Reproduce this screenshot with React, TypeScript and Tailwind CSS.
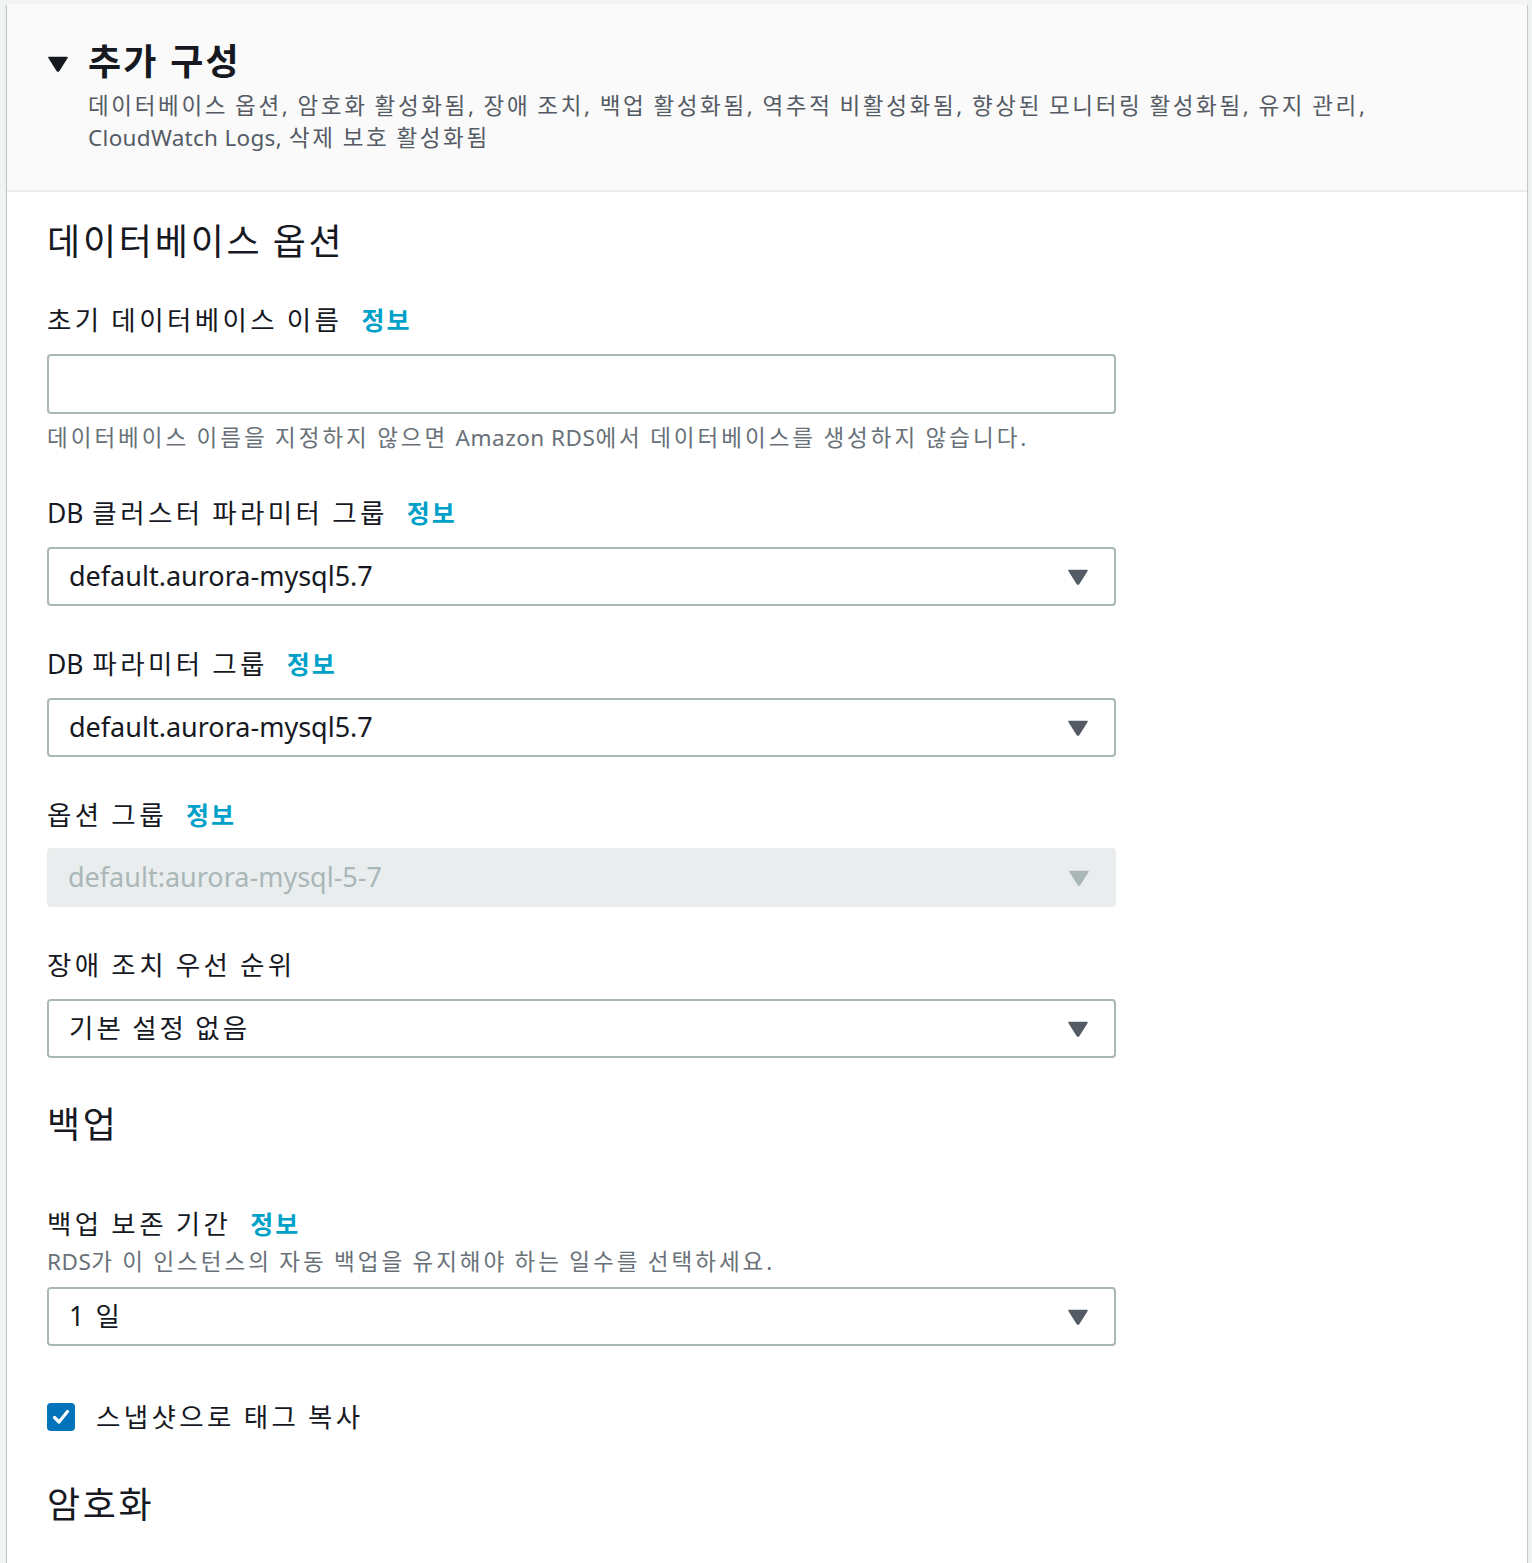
import React from "react";

const font = { fontFamily: '"Noto Sans", "Noto Sans CJK KR", sans-serif' };

function Info() {
  return <span className="ml-[19px] text-[25px] font-bold tracking-[2px] text-[#00a1c9] [word-spacing:0px]">정보</span>;
}

function Label({ children, info = true }: { children: React.ReactNode; info?: boolean }) {
  return (
    <div className="flex items-center h-[36px] text-[26.5px] leading-[36px] tracking-[3.4px] [word-spacing:-1.5px] text-[#16191f]">
      <span>{children}</span>
      {info && <Info />}
    </div>
  );
}

function Arrow({ color }: { color: string }) {
  return (
    <svg width="20" height="16" viewBox="0 0 20 16" className="shrink-0">
      <path d="M1 1.5 L19 1.5 L10.8 14.5 Q10 15.6 9.2 14.5 Z" fill={color} stroke={color} strokeWidth="1.5" strokeLinejoin="round" />
    </svg>
  );
}

function Select({ value, disabled = false, korean = false }: { value: string; disabled?: boolean; korean?: boolean }) {
  const base = disabled
    ? "flex items-center justify-between w-[1069px] h-[59px] rounded-[4px] bg-[#eaeded] pl-[21px] pr-[27px] text-[#aab7b8]"
    : "flex items-center justify-between w-[1069px] h-[59px] rounded-[4px] border-2 border-[#aab7b8] bg-white pl-[20px] pr-[26px] text-[#16191f]";
  return (
    <div className={base}>
      <span className={korean ? "text-[26.5px] tracking-[3px] [word-spacing:-1.5px]" : "text-[27px]"}>{value}</span>
      <Arrow color={disabled ? "#aab7b8" : "#545b64"} />
    </div>
  );
}

export default function App() {
  return (
    <div className="min-h-[1563px] bg-[#f2f3f3] pt-[4px] pl-[7px] pr-[5px]" style={font}>
      <div className="bg-white min-h-[1559px] shadow-[0_1px_1px_0_rgba(0,28,36,0.3),1px_1px_1px_0_rgba(0,28,36,0.15),-1px_1px_1px_0_rgba(0,28,36,0.15)]">
        <div className="h-[188px] bg-[#fafafa] border-b-2 border-[#eaeded] pt-[36px] pl-[41px]">
          <div className="flex items-center h-[44px]">
            <svg width="20" height="16" viewBox="0 0 20 16" className="mr-[20px] mt-[4px]">
              <path d="M1 1.5 L19 1.5 L10.8 14.5 Q10 15.6 9.2 14.5 Z" fill="#16191f" stroke="#16191f" strokeWidth="1.5" strokeLinejoin="round" />
            </svg>
            <span className="text-[36px] font-bold tracking-[2.2px] text-[#16191f] leading-[44px]">추가 구성</span>
          </div>
          <div className="ml-[40px] mt-[6px] text-[22.5px] leading-[32px] tracking-[2.65px] [word-spacing:-1.5px] text-[#545b64] w-[1400px]">
            데이터베이스 옵션, 암호화 활성화됨, 장애 조치, 백업 활성화됨, 역추적 비활성화됨, 향상된 모니터링 활성화됨, 유지 관리,
            <br />
            <span className="tracking-[0.3px] [word-spacing:0px]">CloudWatch Logs,</span> 삭제 보호 활성화됨
          </div>
        </div>

        <div className="pl-[40px] pt-[28px]">
          <div className="h-[44px] leading-[44px] text-[36px] tracking-[2.8px] [word-spacing:-2px] text-[#16191f]">데이터베이스 옵션</div>

          <div className="mt-[38px]">
            <Label>초기 데이터베이스 이름</Label>
          </div>
          <div className="mt-[16px] w-[1069px] h-[60px] rounded-[4px] border-2 border-[#aab7b8] bg-white" />
          <div className="mt-[9px] h-[30px] leading-[30px] text-[22.5px] tracking-[3px] [word-spacing:-1.5px] text-[#687078]">
            데이터베이스 이름을 지정하지 않으면 <span className="tracking-[0.5px] [word-spacing:0px]">Amazon RDS</span>에서 데이터베이스를 생성하지 않습니다.
          </div>

          <div className="mt-[42px]">
            <Label>
              <span className="tracking-[0px]">DB</span> 클러스터 파라미터 그룹
            </Label>
          </div>
          <div className="mt-[16px]">
            <Select value="default.aurora-mysql5.7" />
          </div>

          <div className="mt-[40px]">
            <Label>
              <span className="tracking-[0px]">DB</span> 파라미터 그룹
            </Label>
          </div>
          <div className="mt-[16px]">
            <Select value="default.aurora-mysql5.7" />
          </div>

          <div className="mt-[40px]">
            <Label>옵션 그룹</Label>
          </div>
          <div className="mt-[15px]">
            <Select value="default:aurora-mysql-5-7" disabled />
          </div>

          <div className="mt-[40px]">
            <Label info={false}>장애 조치 우선 순위</Label>
          </div>
          <div className="mt-[16px]">
            <Select value="기본 설정 없음" korean />
          </div>

          <div className="mt-[45px] h-[44px] leading-[44px] text-[36px] tracking-[2.6px] text-[#16191f]">백업</div>

          <div className="mt-[59px]">
            <Label>백업 보존 기간</Label>
          </div>
          <div className="mt-[5px] h-[30px] leading-[30px] text-[22.5px] tracking-[3px] [word-spacing:-1.5px] text-[#687078]">
            <span className="tracking-[0.5px]">RDS</span>가 이 인스턴스의 자동 백업을 유지해야 하는 일수를 선택하세요.
          </div>
          <div className="mt-[10px]">
            <Select value="1 일" korean />
          </div>

          <div className="mt-[53px] flex items-center h-[36px]">
            <div className="w-[28px] h-[28px] rounded-[4px] bg-[#0073bb] flex items-center justify-center">
              <svg width="20" height="20" viewBox="0 0 20 20">
                <path d="M3.5 10.5 L8 15 L16.5 4.5" fill="none" stroke="white" strokeWidth="3.2" strokeLinecap="round" strokeLinejoin="round" />
              </svg>
            </div>
            <span className="ml-[21px] text-[26.5px] tracking-[3.4px] [word-spacing:-1.5px] text-[#16191f] leading-[36px]">스냅샷으로 태그 복사</span>
          </div>

          <div className="mt-[48px] h-[44px] leading-[44px] text-[36px] tracking-[2.6px] text-[#16191f]">암호화</div>
        </div>
      </div>
    </div>
  );
}
